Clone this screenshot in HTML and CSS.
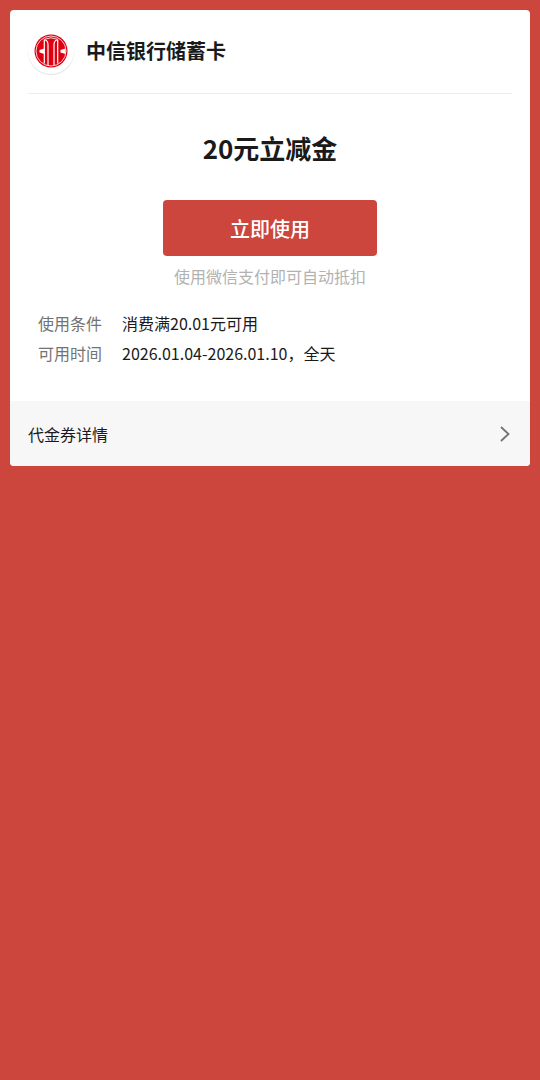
FILE: index.html
```html
<!DOCTYPE html>
<html lang="zh-CN">
<head>
    <meta charset="UTF-8">
    <meta name="viewport" content="width=device-width, initial-scale=1.0">
    <title>代金券</title>
    <link rel="stylesheet" href="styles.css">
</head>
<body>
    <main class="coupon">
        <header class="coupon-header">
            <span class="logo">
                <svg viewBox="0 0 34 34" width="34" height="34" aria-hidden="true">
                    <circle cx="17" cy="17" r="16.5" fill="#e0000f"/>
                    <circle cx="17" cy="17" r="15" fill="none" stroke="#fff" stroke-width="0.8"/>
                    <g fill="none" stroke="#fff" stroke-width="1.2">
                        <path d="M10.300 29.500V6h1q2.700 1 2.700 5v20.500"/>
                        <path d="M23.700 29.500V6h-1q-2.700 1-2.700 5v20.500"/>
                        <path d="M10.300 5.300q6.700-3 13.400 0" stroke-width="0.8"/>
                    </g>
                    <g fill="#fff">
                        <path d="M10.300 14.500L5.500 16v2.500l4.800 1.500z"/>
                        <path d="M31.500 14.500L26.500 16v2.500l5 1.500z"/>
                    </g>
                </svg>
            </span>
            <h1 class="bank-name">中信银行储蓄卡</h1>
        </header>

        <section class="coupon-body">
            <h2 class="coupon-title">20元立减金</h2>
            <button type="button" class="use-btn">立即使用</button>
            <p class="hint">使用微信支付即可自动抵扣</p>
            <dl class="info">
                <dt>使用条件</dt>
                <dd>消费满20.01元可用</dd>
                <dt>可用时间</dt>
                <dd>2026.01.04-2026.01.10，全天</dd>
            </dl>
        </section>

        <a href="#" class="detail-link">
            <span>代金券详情</span>
            <svg viewBox="0 0 10 16" width="10" height="16" aria-hidden="true">
                <path d="M1 1l7.500 7L1 15" fill="none" stroke="#737373" stroke-width="1.800"/>
            </svg>
        </a>
    </main>
</body>
</html>
```
FILE: styles.css
```css
* {
    box-sizing: border-box;
}
body {
    margin: 0;
    padding: 10px;
    min-height: 100vh;
    background-color: #cc463d;
    color: #1a1a1a;
    font-family: "Noto Sans CJK SC", sans-serif;
    font-size: 16px;
}
.coupon {
    background-color: #fff;
    border-radius: 4px;
    overflow: hidden;
}

/* Bank */
.coupon-header {
    display: flex;
    align-items: center;
    gap: 12px;
    height: 84px;
    margin: 0 18px;
    padding-bottom: 1px;
    border-bottom: 1px solid #ededed;
}
.logo {
    display: flex;
    align-items: center;
    justify-content: center;
    width: 46px;
    height: 46px;
    border-radius: 50%;
    box-shadow: 0 1px 1px rgba(0, 0, 0, 0.12);
}
.bank-name {
    margin: 0;
    font-size: 20px;
    line-height: 28px;
    font-weight: 700;
}

/* Coupon */
.coupon-body {
    display: flex;
    flex-direction: column;
    align-items: center;
    padding: 36px 28px 33px;
}
.coupon-title {
    margin: 0 0 34px;
    font-size: 26px;
    line-height: 36px;
    font-weight: 700;
}
.use-btn {
    width: 214px;
    height: 56px;
    padding: 0;
    border: none;
    border-radius: 4px;
    background-color: #cc463d;
    color: #fff;
    font-family: inherit;
    font-size: 20px;
    font-weight: 500;
    cursor: pointer;
}
.hint {
    margin: 8px 0 20px;
    line-height: 24px;
    color: #b2b2b2;
}
.info {
    display: grid;
    grid-template-columns: auto 1fr;
    column-gap: 20px;
    align-self: stretch;
    margin: 0;
    line-height: 30px;
}
.info dt {
    color: #737373;
}
.info dd {
    margin: 0;
}

/* Details */
.detail-link {
    display: flex;
    align-items: center;
    justify-content: space-between;
    height: 65px;
    padding: 0 20px 0 18px;
    background-color: #f7f7f7;
    color: inherit;
    text-decoration: none;
}
```
